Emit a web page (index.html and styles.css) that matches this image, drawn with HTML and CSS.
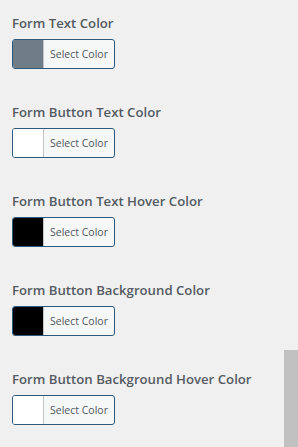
FILE: index.html
```html
<!DOCTYPE html>
<html lang="en">
<head>
  <meta charset="UTF-8">
  <meta name="viewport" content="width=device-width, initial-scale=1.0">
  <title>Form Colors</title>
  <link rel="stylesheet" href="styles.css">
</head>
<body>
  <div class="panel">
    <!-- Cor do texto -->
    <div class="field">
      <label class="field-label">Form Text Color</label>
      <button class="color-btn"><span class="swatch swatch-grey"></span><span class="btn-text">Select Color</span></button>
    </div>

    <div class="field">
      <label class="field-label">Form Button Text Color</label>
      <button class="color-btn"><span class="swatch swatch-white"></span><span class="btn-text">Select Color</span></button>
    </div>

    <div class="field">
      <label class="field-label">Form Button Text Hover Color</label>
      <button class="color-btn"><span class="swatch swatch-black"></span><span class="btn-text">Select Color</span></button>
    </div>

    <div class="field">
      <label class="field-label">Form Button Background Color</label>
      <button class="color-btn"><span class="swatch swatch-black"></span><span class="btn-text">Select Color</span></button>
    </div>

    <div class="field">
      <label class="field-label">Form Button Background Hover Color</label>
      <button class="color-btn"><span class="swatch swatch-white"></span><span class="btn-text">Select Color</span></button>
    </div>
  </div>

  <!-- Barra de rolagem -->
  <div class="scroll-thumb"></div>
</body>
</html>
```

FILE: styles.css
```css
body {
  margin: 0;
  background: #f0f0f1;
  font-family: "Open Sans", Arial, sans-serif;
  overflow: hidden;
}
.panel {
  padding: 13px 12px 0 12px;
}
.field {
  display: flex;
  flex-direction: column;
  align-items: flex-start;
  height: 89px;
}
.field-label {
  font-size: 13.2px;
  font-weight: 600;
  color: #555b62;
  line-height: 20px;
  margin-bottom: 6px;
}
.color-btn {
  display: flex;
  align-items: stretch;
  width: 103px;
  height: 30px;
  padding: 0;
  border: 1px solid #2c5a7e;
  border-radius: 3px;
  background: #f6f7f7;
  overflow: hidden;
  cursor: pointer;
  font-family: inherit;
}
.swatch {
  width: 30px;
  border-right: 1px solid #c3c4c7;
}
.swatch-grey { background: #6f7d86; }
.swatch-white { background: #ffffff; }
.swatch-black { background: #000000; }
.btn-text {
  flex: 1;
  display: flex;
  align-items: center;
  justify-content: center;
  font-size: 10.5px;
  color: #50575e;
}
.scroll-thumb {
  position: absolute;
  left: 284px;
  top: 350px;
  width: 14px;
  height: 97px;
  background: #c1c1c1;
}
```
